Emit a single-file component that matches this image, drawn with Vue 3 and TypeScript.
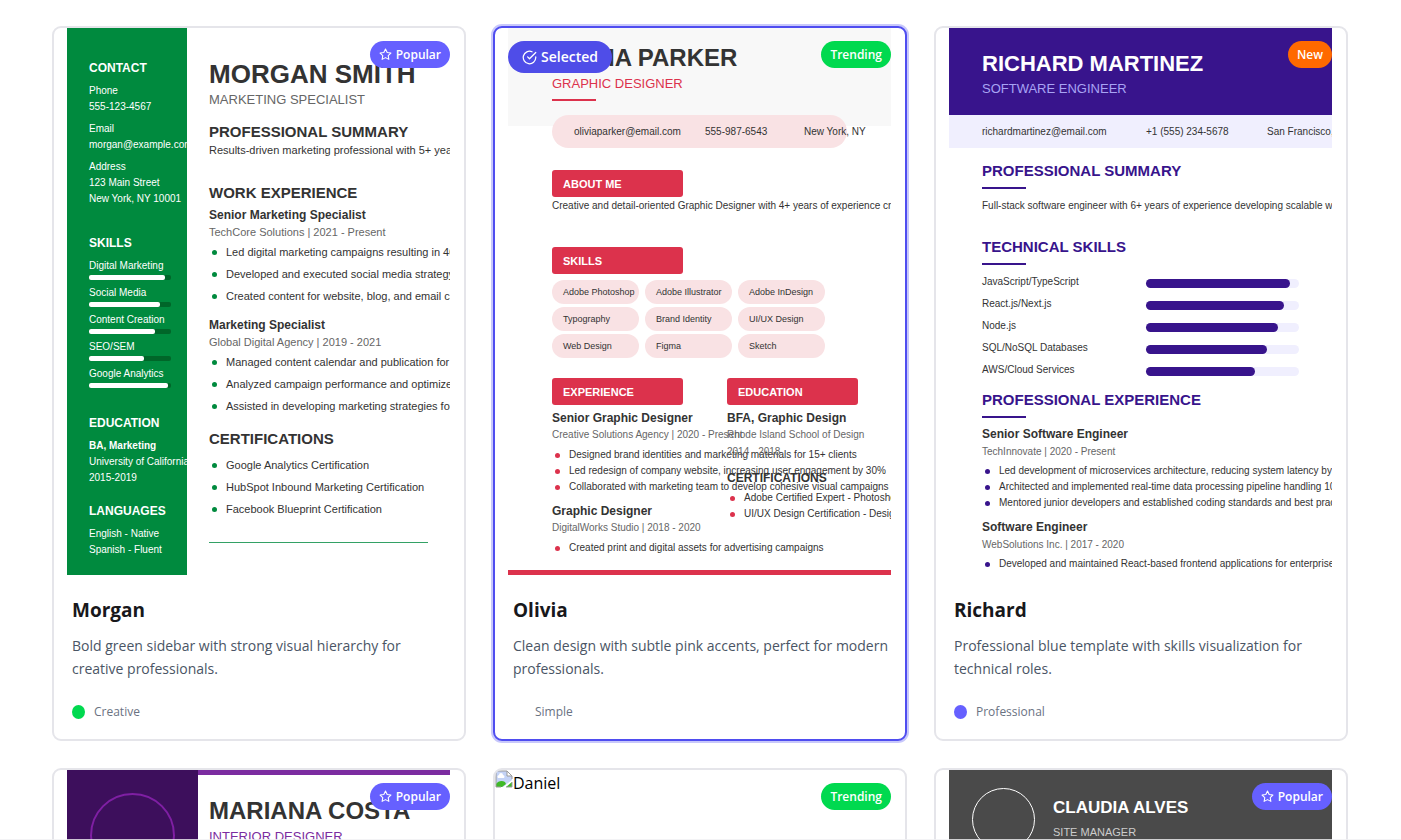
<script setup lang="ts">
type BadgeKind = 'popular' | 'trending' | 'new'

interface ResumeTemplate {
  id: string
  name: string
  badge: BadgeKind
  summary?: string
  category?: string
  tone?: string
}

interface Job {
  title: string
  meta: string
  points: string[]
}

interface Skill {
  label: string
  level: number
}

const selectedId = 'olivia'

const badgeLabels: Record<BadgeKind, string> = {
  popular: 'Popular',
  trending: 'Trending',
  new: 'New',
}

const templates: ResumeTemplate[] = [
  {
    id: 'morgan',
    name: 'Morgan',
    badge: 'popular',
    summary: 'Bold green sidebar with strong visual hierarchy for creative professionals.',
    category: 'Creative',
    tone: 'green',
  },
  {
    id: 'olivia',
    name: 'Olivia',
    badge: 'trending',
    summary: 'Clean design with subtle pink accents, perfect for modern professionals.',
    category: 'Simple',
    tone: 'none',
  },
  {
    id: 'richard',
    name: 'Richard',
    badge: 'new',
    summary: 'Professional blue template with skills visualization for technical roles.',
    category: 'Professional',
    tone: 'indigo',
  },
  { id: 'mariana', name: 'Mariana', badge: 'popular' },
  { id: 'daniel', name: 'Daniel', badge: 'trending' },
  { id: 'claudia', name: 'Claudia', badge: 'popular' },
]

const morganContact: string[][] = [
  ['Phone', '555-123-4567'],
  ['Email', 'morgan@example.com'],
  ['Address', '123 Main Street', 'New York, NY 10001'],
]

const morganSkills: Skill[] = [
  { label: 'Digital Marketing', level: 93 },
  { label: 'Social Media', level: 87 },
  { label: 'Content Creation', level: 80 },
  { label: 'SEO/SEM', level: 67 },
  { label: 'Google Analytics', level: 96 },
]

const morganJobs: Job[] = [
  {
    title: 'Senior Marketing Specialist',
    meta: 'TechCore Solutions | 2021 - Present',
    points: [
      'Led digital marketing campaigns resulting in 40%',
      'Developed and executed social media strategy',
      'Created content for website, blog, and email campaigns',
    ],
  },
  {
    title: 'Marketing Specialist',
    meta: 'Global Digital Agency | 2019 - 2021',
    points: [
      'Managed content calendar and publication for',
      'Analyzed campaign performance and optimized',
      'Assisted in developing marketing strategies for',
    ],
  },
]

const morganCertifications: string[] = [
  'Google Analytics Certification',
  'HubSpot Inbound Marketing Certification',
  'Facebook Blueprint Certification',
]

const oliviaSkills: string[] = [
  'Adobe Photoshop',
  'Adobe Illustrator',
  'Adobe InDesign',
  'Typography',
  'Brand Identity',
  'UI/UX Design',
  'Web Design',
  'Figma',
  'Sketch',
]

const oliviaJobs: Job[] = [
  {
    title: 'Senior Graphic Designer',
    meta: 'Creative Solutions Agency | 2020 - Present',
    points: [
      'Designed brand identities and marketing materials for 15+ clients',
      'Led redesign of company website, increasing user engagement by 30%',
      'Collaborated with marketing team to develop cohesive visual campaigns',
    ],
  },
  {
    title: 'Graphic Designer',
    meta: 'DigitalWorks Studio | 2018 - 2020',
    points: ['Created print and digital assets for advertising campaigns'],
  },
]

const oliviaCertifications: string[] = [
  'Adobe Certified Expert - Photoshop',
  'UI/UX Design Certification - Design',
]

const richardSkills: Skill[] = [
  { label: 'JavaScript/TypeScript', level: 94 },
  { label: 'React.js/Next.js', level: 90 },
  { label: 'Node.js', level: 86 },
  { label: 'SQL/NoSQL Databases', level: 79 },
  { label: 'AWS/Cloud Services', level: 71 },
]

const richardJobs: Job[] = [
  {
    title: 'Senior Software Engineer',
    meta: 'TechInnovate | 2020 - Present',
    points: [
      'Led development of microservices architecture, reducing system latency by 40%',
      'Architected and implemented real-time data processing pipeline handling 100',
      'Mentored junior developers and established coding standards and best practices',
    ],
  },
  {
    title: 'Software Engineer',
    meta: 'WebSolutions Inc. | 2017 - 2020',
    points: ['Developed and maintained React-based frontend applications for enterprise clients'],
  },
]
</script>

<template>
  <main class="gallery">
    <article
      v-for="t in templates"
      :key="t.id"
      class="card"
      :class="{ 'card-selected': t.id === selectedId }"
    >
      <div class="preview">
        <section v-if="t.id === 'morgan'" class="sheet morgan">
          <aside class="side">
            <h4>CONTACT</h4>
            <div v-for="group in morganContact" :key="group[0]" class="side-group">
              <p v-for="line in group" :key="line">{{ line }}</p>
            </div>
            <h4 class="side-skills">SKILLS</h4>
            <div v-for="s in morganSkills" :key="s.label" class="side-skill">
              <p>{{ s.label }}</p>
              <div class="track"><div class="fill" :style="{ width: s.level + '%' }"></div></div>
            </div>
            <h4 class="side-education">EDUCATION</h4>
            <p class="strong">BA, Marketing</p>
            <p>University of California</p>
            <p>2015-2019</p>
            <h4 class="side-languages">LANGUAGES</h4>
            <p>English - Native</p>
            <p>Spanish - Fluent</p>
          </aside>
          <div class="main">
            <h2>MORGAN SMITH</h2>
            <p class="role">MARKETING SPECIALIST</p>
            <h3 class="first">PROFESSIONAL SUMMARY</h3>
            <p>Results-driven marketing professional with 5+ years</p>
            <h3 class="work">WORK EXPERIENCE</h3>
            <div v-for="job in morganJobs" :key="job.title" class="job">
              <h5>{{ job.title }}</h5>
              <p class="meta">{{ job.meta }}</p>
              <ul>
                <li v-for="point in job.points" :key="point">{{ point }}</li>
              </ul>
            </div>
            <h3 class="certs">CERTIFICATIONS</h3>
            <ul class="cert-list">
              <li v-for="c in morganCertifications" :key="c">{{ c }}</li>
            </ul>
            <div class="end-rule"></div>
          </div>
        </section>

        <section v-else-if="t.id === 'olivia'" class="sheet olivia">
          <header>
            <h2>OLIVIA PARKER</h2>
            <p class="role">GRAPHIC DESIGNER</p>
            <div class="rule"></div>
          </header>
          <div class="contact">
            <span>oliviaparker@email.com</span>
            <span>555-987-6543</span>
            <span>New York, NY</span>
          </div>
          <h3 class="about">ABOUT ME</h3>
          <p class="text">Creative and detail-oriented Graphic Designer with 4+ years of experience crafting</p>
          <h3 class="skills">SKILLS</h3>
          <div class="tags">
            <span v-for="s in oliviaSkills" :key="s">{{ s }}</span>
          </div>
          <div class="columns">
            <div class="column">
              <h3>EXPERIENCE</h3>
              <div v-for="job in oliviaJobs" :key="job.title" class="job">
                <h5>{{ job.title }}</h5>
                <p class="meta">{{ job.meta }}</p>
                <ul>
                  <li v-for="point in job.points" :key="point">{{ point }}</li>
                </ul>
              </div>
            </div>
            <div class="column">
              <h3>EDUCATION</h3>
              <div class="job">
                <h5>BFA, Graphic Design</h5>
                <p class="meta">Rhode Island School of Design</p>
                <p class="meta years">2014 - 2018</p>
              </div>
              <h5 class="certs">CERTIFICATIONS</h5>
              <ul class="cert-list">
                <li v-for="c in oliviaCertifications" :key="c">{{ c }}</li>
              </ul>
            </div>
          </div>
          <div class="footer-bar"></div>
        </section>

        <section v-else-if="t.id === 'richard'" class="sheet richard">
          <header>
            <h2>RICHARD MARTINEZ</h2>
            <p class="role">SOFTWARE ENGINEER</p>
          </header>
          <div class="contact">
            <span>richardmartinez@email.com</span>
            <span>+1 (555) 234-5678</span>
            <span>San Francisco, CA</span>
          </div>
          <div class="content">
            <h3 class="first">PROFESSIONAL SUMMARY</h3>
            <p class="text">Full-stack software engineer with 6+ years of experience developing scalable web</p>
            <h3 class="skills">TECHNICAL SKILLS</h3>
            <div class="levels">
              <div v-for="s in richardSkills" :key="s.label" class="level">
                <span>{{ s.label }}</span>
                <div class="track"><div class="fill" :style="{ width: s.level + '%' }"></div></div>
              </div>
            </div>
            <h3 class="experience">PROFESSIONAL EXPERIENCE</h3>
            <div v-for="job in richardJobs" :key="job.title" class="job">
              <h5>{{ job.title }}</h5>
              <p class="meta">{{ job.meta }}</p>
              <ul>
                <li v-for="point in job.points" :key="point">{{ point }}</li>
              </ul>
            </div>
          </div>
        </section>

        <section v-else-if="t.id === 'mariana'" class="sheet mariana">
          <aside class="side"><div class="portrait"></div></aside>
          <div class="main">
            <h2>MARIANA COSTA</h2>
            <p class="role">INTERIOR DESIGNER</p>
          </div>
        </section>

        <section v-else-if="t.id === 'claudia'" class="sheet claudia">
          <div class="portrait"></div>
          <div class="main">
            <h2>CLAUDIA ALVES</h2>
            <p class="role">SITE MANAGER</p>
          </div>
        </section>

        <div v-else class="missing">
          <svg class="broken" viewBox="0 0 18 18" aria-hidden="true">
            <path d="M1 1h11l5 5v4L8 17H1z" fill="#c4d3f6" />
            <path d="M3 8a2 2 0 0 1 1-3 2 2 0 0 1 4 0 2 2 0 0 1 1 3z" fill="#ffffff" />
            <path d="M1 17v-3c2-3 6-4 9-2l1 2-4 3z" fill="#3fb927" />
            <path d="M17 12v5h-6z" fill="#3fb927" />
            <path d="M12 1v5h5z" fill="#ffffff" />
            <path d="M1 17V1h11l5 5v3M12 1v5h5M1 17h5M11 17h6v-5" fill="none" stroke="#9b9b9b" />
          </svg>
          <span>{{ t.name }}</span>
        </div>
      </div>

      <span v-if="t.id === selectedId" class="badge badge-selected">
        <svg viewBox="0 0 24 24" aria-hidden="true">
          <path d="M22 11.08V12a10 10 0 1 1-5.93-9.14" />
          <polyline points="22 4 12 14.01 9 11.01" />
        </svg>
        Selected
      </span>
      <span class="badge badge-corner" :class="'badge-' + t.badge">
        <svg v-if="t.badge === 'popular'" viewBox="0 0 24 24" aria-hidden="true">
          <polygon
            points="12 2 15.09 8.26 22 9.27 17 14.14 18.18 21.02 12 17.77 5.82 21.02 7 14.14 2 9.27 8.91 8.26 12 2"
          />
        </svg>
        {{ badgeLabels[t.badge] }}
      </span>

      <div v-if="t.summary" class="info">
        <h2>{{ t.name }}</h2>
        <p class="summary">{{ t.summary }}</p>
        <p class="category"><i :class="'dot-' + t.tone"></i>{{ t.category }}</p>
      </div>
    </article>
  </main>
</template>

<style>
body {
  margin: 0;
  background: #ffffff;
}
</style>

<style scoped>
.gallery {
  display: grid;
  grid-template-columns: repeat(3, minmax(0, 1fr));
  gap: 27px;
  padding: 26px 53px 26px 52px;
  font-family: "Segoe UI", "Open Sans", "Noto Sans", sans-serif;
}

.gallery::after {
  content: "";
  position: fixed;
  inset: auto 0 0;
  height: 1px;
  background: rgba(240, 240, 242, 0.8);
}

h2,
h3,
h4,
h5,
p,
ul {
  margin: 0;
  padding: 0;
}

/* Card frame */
.card {
  position: relative;
  border: 2px solid #e5e5ea;
  border-radius: 9px;
  background: #ffffff;
  overflow: hidden;
}

.card-selected {
  border-color: #4f4df0;
  box-shadow: 0 0 0 2px #c8c8fb;
}

.preview {
  display: flex;
  min-height: 547px;
}

.info {
  padding: 21px 17px 17px 18px;
}

.info h2 {
  font-size: 19px;
  line-height: 28px;
  color: #18181b;
}

.summary {
  margin-top: 10px;
  font-size: 14px;
  line-height: 23px;
  color: #4a5565;
}

.category {
  display: flex;
  align-items: center;
  gap: 9px;
  margin-top: 22px;
  font-size: 12px;
  line-height: 20px;
  color: #6a7282;
}

.category i {
  width: 13px;
  height: 14px;
  border-radius: 50%;
}

.dot-green {
  background: #00d94f;
}

.dot-indigo {
  background: #6660ff;
}

/* Badges */
.badge {
  position: absolute;
  top: 13px;
  display: flex;
  align-items: center;
  border-radius: 16px;
  color: #ffffff;
  font-weight: 600;
}

.badge svg {
  fill: none;
  stroke: currentColor;
  stroke-width: 2;
  stroke-linecap: round;
  stroke-linejoin: round;
}

.badge-corner {
  right: 14px;
  gap: 4px;
  padding: 0 9px;
  font-size: 12px;
  line-height: 27px;
}

.badge-corner svg {
  width: 13px;
  height: 13px;
}

.badge-selected {
  left: 13px;
  gap: 4px;
  padding: 0 14px;
  font-size: 14px;
  line-height: 32px;
  background: #4f4de8;
}

.badge-selected svg {
  width: 15px;
  height: 15px;
}

.badge-popular {
  background: #6660ff;
}

.badge-trending {
  background: #00d94f;
}

.badge-new {
  background: #ff6900;
}

/* Parts shared by every résumé sheet */
.sheet {
  flex: 1;
  min-width: 0;
  margin: 0 14px 0 13px;
  overflow: hidden;
  background: #ffffff;
  color: #333333;
  font-family: "Liberation Sans", Arial, sans-serif;
  font-size: 10px;
  line-height: 16px;
  white-space: nowrap;
}

.role {
  font-size: 13px;
  line-height: 22px;
}

h3 {
  font-size: 15px;
  line-height: 20px;
}

h5 {
  font-size: 12px;
  line-height: 20px;
}

.meta {
  line-height: 14px;
  color: #666666;
}

ul {
  list-style: none;
}

li {
  display: flex;
  align-items: center;
}

li::before {
  content: "";
  flex: none;
  width: 5px;
  height: 5px;
  margin: 0 9px 0 3px;
  border-radius: 50%;
  background: var(--accent);
}

.fill {
  height: 100%;
  border-radius: inherit;
}

/* Morgan */
.morgan {
  --accent: #008a3e;
  display: flex;
}

.morgan .side {
  flex: none;
  box-sizing: border-box;
  width: 120px;
  padding: 30px 16px 16px 22px;
  background: #008a3e;
  color: #ffffff;
}

.side h4 {
  margin-bottom: 5px;
  font-size: 12px;
  line-height: 20px;
}

.side-group + .side-group {
  margin-top: 6px;
}

.side .side-skills {
  margin-top: 26px;
}

.side-skill {
  padding-bottom: 5px;
}

.side-skill .track {
  height: 5px;
  margin-top: 1px;
  border-radius: 2px;
  background: #006629;
}

.side-skill .fill {
  background: #ffffff;
}

.side .side-education {
  margin-top: 20px;
}

.side .side-languages {
  margin-top: 15px;
}

.strong {
  font-weight: 700;
}

.morgan .main {
  flex: 1;
  min-width: 0;
  padding: 31px 22px 0;
  font-size: 11px;
}

.morgan h2 {
  font-size: 26px;
  line-height: 30px;
}

.morgan .role {
  color: #666666;
}

.morgan .first {
  margin-top: 11px;
}

.morgan .work {
  margin: 25px 0 2px;
}

.morgan .job + .job {
  margin-top: 8px;
}

.morgan .job ul {
  margin-top: 2px;
}

.morgan li {
  line-height: 22px;
}

.morgan .certs {
  margin: 12px 0 5px;
}

.end-rule {
  height: 1px;
  margin-top: 22px;
  background: #33a165;
}

/* Olivia */
.olivia {
  --accent: #dc324c;
  display: flex;
  flex-direction: column;
}

.olivia header {
  padding: 16px 44px 25px;
  background: #f8f8f8;
}

.olivia h2 {
  font-size: 24px;
  line-height: 28px;
}

.olivia .role {
  line-height: 24px;
  color: #dc324c;
}

.olivia .rule {
  width: 44px;
  height: 2px;
  margin-top: 3px;
  background: #dc324c;
}

.olivia .contact {
  display: grid;
  grid-template-columns: 131px 99px 1fr;
  margin: -11px 44px 0;
  padding-left: 22px;
  border-radius: 17px;
  background: #f9e2e4;
  line-height: 33px;
}

.olivia h3 {
  box-sizing: border-box;
  width: 131px;
  padding: 1px 0 0 11px;
  border-radius: 3px;
  background: #dc324c;
  color: #ffffff;
  font-size: 11px;
  line-height: 26px;
}

.olivia .about {
  margin: 22px 0 1px 44px;
}

.olivia .text {
  margin-left: 44px;
}

.olivia .skills {
  margin: 33px 0 6px 44px;
}

.tags {
  display: grid;
  grid-template-columns: repeat(3, 87px);
  gap: 3px 6px;
  margin-left: 44px;
  font-size: 9px;
  line-height: 24px;
}

.tags span {
  padding-left: 11px;
  border-radius: 12px;
  background: #f9e2e4;
}

.columns {
  display: grid;
  grid-template-columns: 1fr 1fr;
  gap: 11px;
  margin: 20px 0 14px 44px;
}

.column {
  min-width: 0;
}

.olivia .job {
  margin-top: 3px;
}

.olivia .job + .job {
  margin-top: 6px;
}

.olivia .job ul {
  margin-top: 5px;
}

.years {
  margin-top: 3px;
}

.olivia .certs {
  margin: 9px 0 2px;
}

.footer-bar {
  height: 5px;
  margin-top: auto;
  background: #dc324c;
}

/* Richard */
.richard {
  --accent: #38148c;
}

.richard header {
  padding: 22px 33px 15px;
  background: #38148c;
}

.richard h2 {
  color: #ffffff;
  font-size: 22px;
  line-height: 28px;
}

.richard .role {
  color: #a8a4f4;
}

.richard .contact {
  display: grid;
  grid-template-columns: 164px 121px 1fr;
  padding-left: 33px;
  background: #f0effe;
  line-height: 33px;
}

.richard .content {
  padding-left: 33px;
}

.richard h3 {
  color: #38148c;
}

.richard h3::after {
  content: "";
  display: block;
  width: 44px;
  height: 2px;
  margin-top: 6px;
  background: #38148c;
}

.richard .first {
  margin: 13px 0 9px;
}

.richard .skills {
  margin: 23px 0 6px;
}

.level {
  display: grid;
  grid-template-columns: 164px 153px;
  align-items: center;
  line-height: 22px;
}

.level .track {
  height: 9px;
  margin-top: 3px;
  border-radius: 5px;
  background: #f0effe;
}

.level .fill {
  background: #38148c;
}

.richard .experience {
  margin: 9px 0 6px;
}

.richard .meta {
  line-height: 16px;
}

.richard .job + .job {
  margin-top: 6px;
}

.richard .job ul {
  margin-top: 3px;
}

/* Mariana */
.mariana {
  display: flex;
}

.mariana .side {
  flex: none;
  box-sizing: border-box;
  width: 131px;
  padding: 23px 23px 0;
  background: #3d0f5c;
}

.portrait {
  box-sizing: border-box;
  aspect-ratio: 1;
  border: 2px solid #7f1fa3;
  border-radius: 50%;
}

.mariana .main {
  flex: 1;
  min-width: 0;
  padding: 22px 0 0 11px;
  border-top: 5px solid #7b2ca0;
}

.mariana h2 {
  font-size: 24px;
  line-height: 28px;
}

.mariana .role {
  color: #7b2ca0;
  line-height: 24px;
}

/* Claudia */
.claudia {
  display: flex;
  gap: 18px;
  padding: 18px 0 0 23px;
  background: #4a4a4a;
}

.claudia .portrait {
  flex: none;
  align-self: flex-start;
  width: 63px;
  border: 1px solid #ffffff;
}

.claudia .main {
  padding-top: 8px;
}

.claudia h2 {
  color: #ffffff;
  font-size: 17px;
  line-height: 24px;
}

.claudia .role {
  color: #cccccc;
  font-size: 11px;
  line-height: 24px;
}

/* Preview whose picture is unavailable */
.missing {
  display: flex;
  align-items: flex-start;
  color: #000000;
  font-size: 16px;
  line-height: 27px;
}

.broken {
  width: 18px;
  height: 18px;
}
</style>
